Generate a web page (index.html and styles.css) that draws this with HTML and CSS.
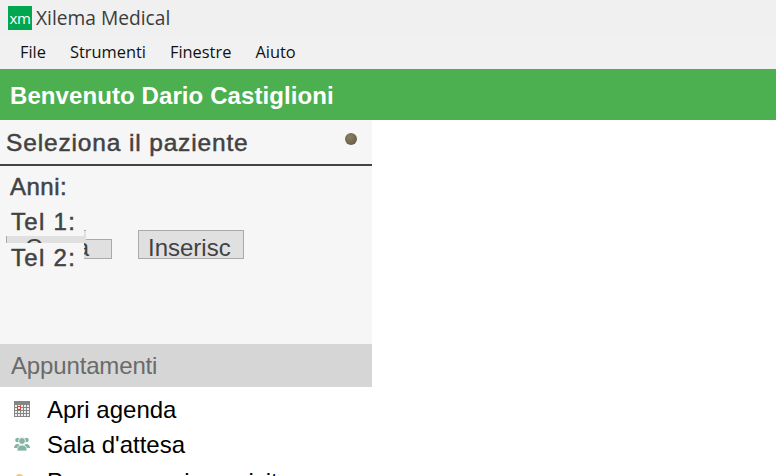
FILE: index.html
```html
<!DOCTYPE html>
<html lang="it">
<head>
<meta charset="utf-8">
<title>Xilema Medical</title>
<link rel="stylesheet" href="styles.css">
</head>
<body>
<div class="titlebar">
  <span class="logo">xm</span>
  <span class="apptitle">Xilema Medical</span>
</div>
<nav class="menubar">
  <span>File</span><span>Strumenti</span><span>Finestre</span><span>Aiuto</span>
</nav>
<header class="welcome">Benvenuto Dario Castiglioni</header>
<main class="content">
  <aside class="sidebar">
    <section class="patient">
      <div class="patient-head">
        <h2>Seleziona il paziente</h2>
        <span class="dot"></span>
      </div>
      <div class="patient-body">
        <div class="anni">Anni:</div>
        <div class="actions">
          <button class="btn btn-first">Cerca</button>
          <button class="btn btn-second">Inserisc</button>
        </div>
        <div class="cover-right"></div>
        <div class="tel1">Tel 1:</div>
        <div class="tel2">Tel 2:</div>
      </div>
    </section>
    <h3 class="section-title">Appuntamenti</h3>
    <ul class="links">
      <li>
        <svg class="ico" viewBox="0 0 16 16" width="16" height="16"><rect width="16" height="16" fill="#858585"/><g fill="#efefef"><rect x="1" y="4" width="2" height="2"/><rect x="4" y="4" width="2" height="2"/><rect x="7" y="4" width="2" height="2"/><rect x="10" y="4" width="2" height="2"/><rect x="13" y="4" width="2" height="2"/><rect x="1" y="7" width="2" height="2"/><rect x="4" y="7" width="2" height="2"/><rect x="7" y="7" width="2" height="2"/><rect x="10" y="7" width="2" height="2"/><rect x="13" y="7" width="2" height="2"/><rect x="1" y="10" width="2" height="2"/><rect x="4" y="10" width="2" height="2"/><rect x="7" y="10" width="2" height="2"/><rect x="10" y="10" width="2" height="2"/><rect x="13" y="10" width="2" height="2"/><rect x="1" y="13" width="2" height="2"/><rect x="4" y="13" width="2" height="2"/><rect x="7" y="13" width="2" height="2"/><rect x="10" y="13" width="2" height="2"/><rect x="13" y="13" width="2" height="2"/></g><rect x="3.500" y="5.500" width="3" height="3" fill="#f4f0ee" stroke="#d9482f"/></svg>
        Apri agenda
      </li>
      <li>
        <svg class="ico" viewBox="0 0 16 16" width="16" height="16"><g fill="#86b3a3"><circle cx="3.500" cy="4" r="2.300"/><circle cx="12.500" cy="4" r="2.300"/><path d="M0 12c0-2 1.500-4 3.500-4s3 2 3 4H0zM9.500 12c0-2 1-4 3-4s3.500 2 3.500 4H9.500z"/><circle cx="8" cy="5" r="3.400" stroke="#fff" stroke-width=".8"/><path d="M3 14c0-3 2-5 5-5s5 2 5 5v1H3z" stroke="#fff" stroke-width=".8"/></g></svg>
        Sala d'attesa
      </li>
      <li class="cut-row">
        <svg class="ico" viewBox="0 0 16 16" width="16" height="16"><circle cx="5.500" cy="5" r="4" fill="#e9c784"/></svg>
        Programmazione visite
      </li>
    </ul>
  </aside>
</main>
</body>
</html>
```
FILE: styles.css
```css
* { box-sizing: border-box; }
html, body { margin: 0; height: 100%; overflow: hidden; background: #fff; }
body { width: 776px; height: 476px; font-family: "Liberation Sans", Arial, sans-serif; display: flex; flex-direction: column; }

.titlebar { height: 34px; background: #f0f0f0; display: flex; align-items: center; padding: 0 0 0 8px; flex: none; }
.logo { width: 24px; height: 24px; background: #00a650; color: #fff; font: 15px/24px "Open Sans", sans-serif; text-align: center; margin-top: 1px; letter-spacing: -0.3px; }
.apptitle { font: 19.200px "Open Sans", sans-serif; color: #3c3c3c; margin-left: 4px; }

.menubar { height: 35px; background: #f1f1f1; display: flex; gap: 24px; padding: 6px 0 0 20px; font: 16.400px "Open Sans", sans-serif; color: #111; flex: none; }

.welcome { height: 51px; background: #4caf50; color: #fff; font-size: 24px; font-weight: 700; line-height: 53px; padding-left: 10px; flex: none; letter-spacing: 0.09px; }

.content { flex: 1; display: flex; min-height: 0; }
.sidebar { width: 372px; display: flex; flex-direction: column; }

.patient { height: 224px; background: #f6f6f6; flex: none; }
.patient-head { height: 46px; border-bottom: 2px solid #424242; display: flex; justify-content: space-between; padding: 8px 15px 0 6px; }
.patient-head h2 { margin: 0; font-size: 24.500px; font-weight: 400; line-height: 30px; color: #424242; letter-spacing: 0.85px; -webkit-text-stroke: 0.5px #424242; }
.dot { width: 12px; height: 12px; border-radius: 50%; margin-top: 5px; background: radial-gradient(circle at 40% 35%, #8c7f62, #5d5340); }

.patient-body { position: relative; height: 178px; color: #424242; font-size: 24px; -webkit-text-stroke: 0.5px #424242; }
.anni { position: absolute; left: 10px; top: 7px; line-height: 28px; letter-spacing: 0.5px; }
.tel1 { position: absolute; left: 6px; top: 42px; width: 78px; height: 28px; padding-left: 5px; line-height: 28px; letter-spacing: 1.300px; background: #f6f6f6; }
.tel2 { position: absolute; left: 6px; top: 77px; width: 78px; height: 28px; padding-left: 5px; line-height: 30px; letter-spacing: 1.300px; background: #f6f6f6; }
.cover-right { position: absolute; left: 86px; top: 64px; width: 26px; height: 10px; background: #f6f6f6; border-bottom: 1px solid #aaa; }

.actions { position: absolute; left: 6px; top: 64px; display: flex; gap: 26px; }
.btn { width: 106px; height: 29px; font: 24px/33px "Liberation Sans", sans-serif; color: #424242; background: #e0e0e0; border: 1px solid #aaa; padding: 0 0 0 9px; text-align: left; overflow: hidden; white-space: nowrap; -webkit-text-stroke: 0; }
.btn-first { padding-left: 18px; }

.section-title { margin: 0; height: 43px; background: #d6d6d6; color: #6a6a6a; font-size: 24px; font-weight: 400; line-height: 44px; padding-left: 11px; flex: none; letter-spacing: -0.15px; }

.links { margin: 0; padding: 5px 0 0; list-style: none; }
.links li { height: 35px; display: flex; align-items: center; gap: 17px; padding-left: 14px; font-size: 24px; color: #000; line-height: 35px; white-space: nowrap; }
.links .cut-row { margin-top: 2px; }
.ico { flex: none; margin-top: -1px; }
```
